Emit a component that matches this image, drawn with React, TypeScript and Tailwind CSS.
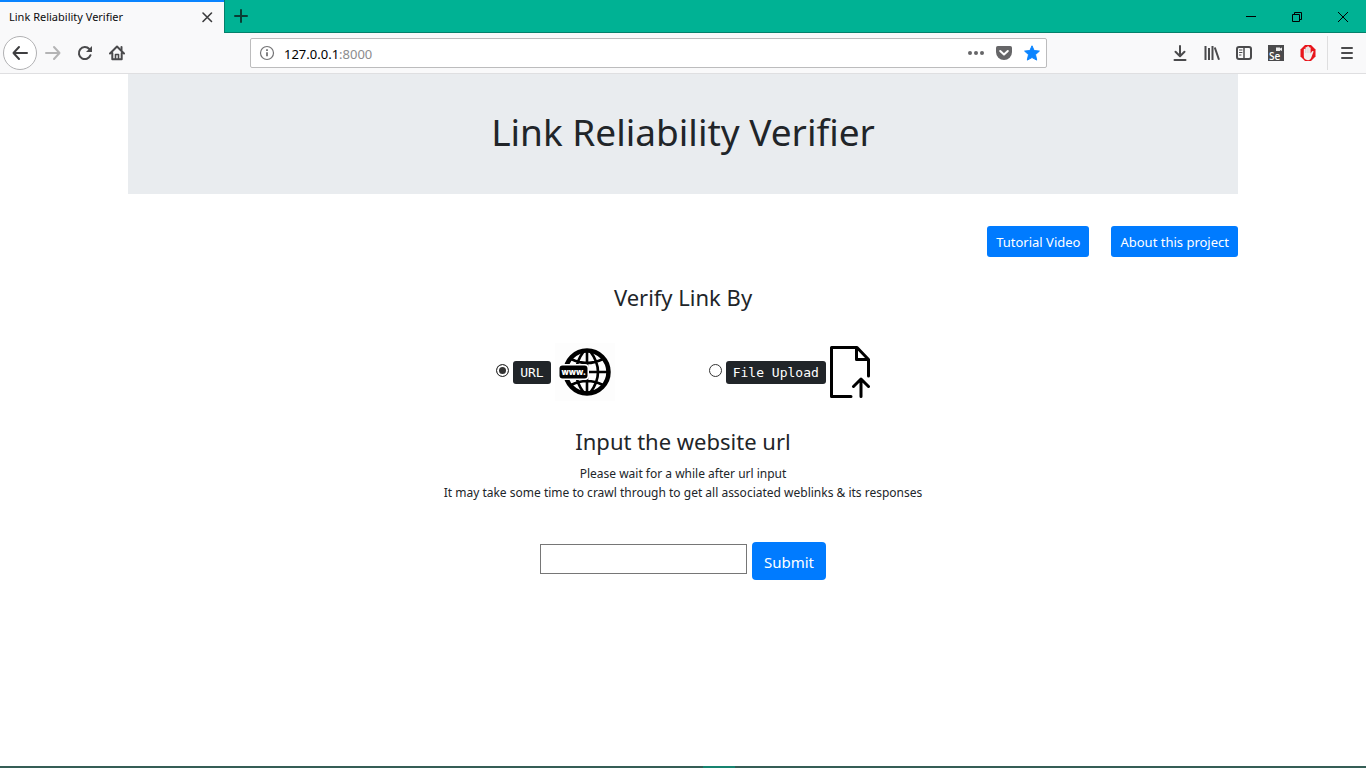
import { useState } from "react";
import type { ReactNode } from "react";

function IconButton({ label, children }: { label: string; children: ReactNode }) {
  return (
    <button type="button" aria-label={label} className="flex h-8 w-8 items-center justify-center text-[#4a4a4c]">
      {children}
    </button>
  );
}

const stroke = { fill: "none", stroke: "currentColor", strokeWidth: 2, strokeLinecap: "round", strokeLinejoin: "round" } as const;

function TabStrip() {
  return (
    <div className="flex h-[33px] bg-[#00b294]">
      <div className="flex w-56 items-center justify-between border-t-2 border-[#0a84ff] bg-[#f9f9fa] pr-2.5 pb-0.5 pl-[9px]">
        <span className="text-[11px] leading-4 text-[#0c0c0d]">Link Reliability Verifier</span>
        <button type="button" aria-label="Close tab" className="text-[#3c3c3e]">
          <svg width="14" height="14" viewBox="0 0 14 14" {...stroke} strokeWidth="1.6"><path d="M3 3l8.500 8.500M11.500 3L3 11.500" /></svg>
        </button>
      </div>
      <div className="flex flex-1 justify-between border-b border-l border-[#04806b]">
        <button type="button" aria-label="New tab" className="flex w-8 items-center justify-center text-[#0b3d34]">
          <svg width="16" height="16" viewBox="0 0 16 16" {...stroke}><path d="M8 2v12M2 8h12" /></svg>
        </button>
        <div className="flex text-black">
          <button type="button" aria-label="Minimize" className="flex w-[46px] items-center justify-center">
            <svg width="12" height="12" viewBox="0 0 12 12" fill="none" stroke="currentColor"><path d="M1 6.500h10" /></svg>
          </button>
          <button type="button" aria-label="Restore" className="flex w-[46px] items-center justify-center">
            <svg width="12" height="12" viewBox="0 0 12 12" fill="none" stroke="currentColor"><path d="M1.500 4.500h7v7h-7zM3.500 4.500v-2h7v7h-2" /></svg>
          </button>
          <button type="button" aria-label="Close window" className="flex w-[46px] items-center justify-center">
            <svg width="12" height="12" viewBox="0 0 12 12" fill="none" stroke="currentColor"><path d="M1 2l10 10M11 2L1 12" /></svg>
          </button>
        </div>
      </div>
    </div>
  );
}

function Toolbar() {
  return (
    <div className="flex h-[41px] items-center border-b border-[#dfdfe1] bg-[#f9f9fa] px-[3px]">
      <button type="button" aria-label="Back" className="flex h-[34px] w-[34px] items-center justify-center rounded-full border border-[#b1b1b3] bg-white text-[#3e3e40]">
        <svg width="16" height="16" viewBox="0 0 16 16" {...stroke}><path d="M15 8H1.500M7 2L1.500 8L7 14" /></svg>
      </button>
      <button type="button" aria-label="Forward" disabled className="flex h-8 w-8 items-center justify-center text-[#b4b4b5]">
        <svg width="16" height="16" viewBox="0 0 16 16" {...stroke}><path d="M1 8h13.500M9 2l5.500 6L9 14" /></svg>
      </button>
      <IconButton label="Reload">
        <svg width="16" height="16" viewBox="0 0 16 16" {...stroke}>
          <path d="M13.500 10.200A6 6 0 1 1 12.300 4" />
          <path d="M15 1v6H9z" fill="currentColor" stroke="none" />
        </svg>
      </IconButton>
      <IconButton label="Home">
        <svg width="16" height="16" viewBox="0 0 16 16" {...stroke}>
          <path d="M1 8.500L8 1.500l7 7M3.300 8v6.300h9.400V8" />
          <path d="M6.500 14V9.500h3V14" strokeWidth="1.600" /><path d="M12.500 2v3" />
        </svg>
      </IconButton>

      <div className="mx-[117px] flex h-[30px] flex-1 items-center rounded-xs border border-[#bcbcbd] bg-white pr-1.5 pl-2">
        <svg width="16" height="16" viewBox="0 0 16 16" fill="none" stroke="#737375" aria-hidden="true">
          <circle cx="8" cy="8" r="6.500" strokeWidth="1.200" />
          <path d="M8 7.200v4M8 4.300v1.700" strokeWidth="1.800" />
        </svg>
        <span className="relative ml-[9px] flex-1 pt-0.5 text-[13px] leading-5">
          <input aria-label="Address" defaultValue="127.0.0.1:8000" className="w-full bg-transparent text-transparent caret-black outline-none" />
          <span aria-hidden="true" className="pointer-events-none absolute inset-0 pt-0.5 text-black">127.0.0.1<span className="text-[#8c8c8d]">:8000</span></span>
        </span>
        <div className="flex gap-3 text-[#666668]">
          <button type="button" aria-label="Page actions">
            <svg width="16" height="16" viewBox="0 0 16 16" fill="currentColor"><circle cx="2" cy="8" r="2" /><circle cx="8" cy="8" r="2" /><circle cx="14" cy="8" r="2" /></svg>
          </button>
          <button type="button" aria-label="Save to Pocket">
            <svg width="16" height="16" viewBox="0 0 16 16"><path d="M1.800 1h12.400Q16 1 16 2.800V7a8 8 0 0 1-16 0V2.800Q0 1 1.800 1z" fill="currentColor" /><path d="M4.200 6L8 9.600L11.800 6" {...stroke} stroke="#fff" /></svg>
          </button>
          <button type="button" aria-label="Bookmark this page" className="text-[#0a84ff]">
            <svg width="16" height="16" viewBox="0 0 16 16" fill="currentColor" stroke="currentColor" strokeLinejoin="round"><path d="M8 .8l2.100 4.700 5.300.6-3.900 3.500 1.200 5.500L8 12.500l-4.700 2.600 1.200-5.500L.6 6.100l5.300-.6z" /></svg>
          </button>
        </div>
      </div>

      <IconButton label="Downloads">
        <svg width="16" height="16" viewBox="0 0 16 16" {...stroke}><path d="M8 1v10M3.500 6.800L8 11.300l4.500-4.500M2.500 15h11" /></svg>
      </IconButton>
      <IconButton label="Library">
        <svg width="16" height="16" viewBox="0 0 16 16" {...stroke} strokeLinecap="butt"><path d="M1.500 1v14M5 3v12M8.500 1v14M10.800 2.500l4.200 12.300" /></svg>
      </IconButton>
      <IconButton label="Sidebars">
        <svg width="16" height="16" viewBox="0 0 16 16" {...stroke}><rect x="1" y="2" width="14" height="12" rx="2" /><path d="M8 2v12" strokeWidth="1.500" /><path d="M3.500 5h2.500M3.500 7.500h2.500M3.500 10h1.500" strokeWidth="1" /></svg>
      </IconButton>
      <IconButton label="Selenium">
        <svg width="16" height="16" viewBox="0 0 16 16">
          <path d="M0 0h16v16H0z" fill="currentColor" />
          <path d="M8 2.500h4v1l2-1v3.500l-2-1V6H8z" fill="#eee" />
          <text x="1" y="14.500" fontSize="10" fontWeight="600" fill="#fff" fontFamily="Open Sans, sans-serif">Se</text>
        </svg>
      </IconButton>
      <IconButton label="Ad blocker">
        <svg width="16" height="16" viewBox="0 0 16 16">
          <path d="M5 0h6l4.500 4.500v7L11 16H5L.5 11.500v-7z" fill="#e8151b" />
          <path d="M3.800 8.500V4.200q1-1 1.700 0V2.400q1-1 1.700 0V1.600q1-.8 1.700 0v1q1-.9 1.700.1v5.800l1.500-2.300q1.400-.6 1.500.4l-1.900 5Q10.700 15.200 8 15.200q-4.200-.5-4.200-4.200z" fill="#f2f0f0" />
          <path d="M5.500 4v4M7.200 3v5M8.900 3v5" stroke="#bdb8b8" strokeWidth=".4" />
        </svg>
      </IconButton>
      <div className="mx-[3px] h-[34px] w-px bg-[#dededf]" />
      <IconButton label="Open menu">
        <svg width="16" height="16" viewBox="0 0 16 16" {...stroke}><path d="M3 3h10M3 8h10M3 13h10" /></svg>
      </IconButton>
    </div>
  );
}

function GlobeIcon() {
  return (
    <svg width="60" height="58" viewBox="0 0 60 58" className="bg-[#fdfdfd]" aria-hidden="true">
      <g fill="none" stroke="#000" strokeWidth="3">
        <circle cx="32" cy="29" r="21.500" strokeWidth="4.500" />
        <path d="M32 8v42M11 29h42M16 16q16 8 32 0M16 42q16-8 32 0M29 8Q13 29 29 50M35 8Q51 29 35 50" strokeWidth="2.600" />
      </g>
      <rect x="3" y="21" width="31" height="16" rx="4" fill="#fff" />
      <rect x="4.500" y="22.500" width="28" height="13" rx="3" fill="#000" />
      <text x="18.500" y="31.500" textAnchor="middle" fontSize="8" fontWeight="800" fill="#fff" fontFamily="Open Sans, sans-serif">www.</text>
    </svg>
  );
}

function FileUploadIcon() {
  return (
    <svg width="40" height="52" viewBox="0 0 40 52" fill="none" stroke="#000" strokeWidth="3" strokeLinejoin="round" aria-hidden="true">
      <path d="M21 50.500H1.500v-49H27l11.500 12V30" strokeLinecap="round" />
      <path d="M26.500 2v11.500h12" />
      <path d="M31 50.500V33M23.500 40.500l7.500-7.500 7.500 7.500" strokeLinecap="round" />
    </svg>
  );
}

function Choice({ label, checked, onSelect, children }: { label: string; checked: boolean; onSelect: () => void; children: ReactNode }) {
  return (
    <label className="flex items-center gap-1">
      <input
        type="radio"
        name="method"
        checked={checked}
        onChange={onSelect}
        className="mb-1 h-[13px] w-[13px] appearance-none rounded-full border border-[#333] bg-white checked:bg-[#333] checked:shadow-[inset_0_0_0_2px_#fff]"
      />
      <kbd className="rounded-[3px] bg-[#212529] px-[7px] py-0.5 text-[13px] leading-[19px] text-white font-['DejaVu_Sans_Mono','Liberation_Mono',monospace]">
        {label}
      </kbd>
      {children}
    </label>
  );
}

export default function App() {
  const [method, setMethod] = useState<"url" | "file">("url");
  return (
    <div className="flex min-h-screen flex-col bg-white text-[#212529] font-['Noto_Sans','Open_Sans',sans-serif]">
      <TabStrip />
      <Toolbar />
      <main className="mx-auto w-full max-w-[1110px] flex-1 text-center">
        <header className="bg-[#e9ecef] pt-[34px] pb-[38px]">
          <h1 className="text-[37px] leading-[48px]">Link Reliability Verifier</h1>
        </header>
        <nav className="mt-8 flex justify-end gap-[22px] text-[13px] leading-[31px] text-white">
          <a href="#tutorial" className="h-[31px] rounded-[3px] bg-[#007bff] px-[9px] pt-px">Tutorial Video</a>
          <a href="#about" className="h-[31px] rounded-[3px] bg-[#007bff] px-[9px] pt-px">About this project</a>
        </nav>
        <h2 className="mt-6 text-[22px] leading-8">Verify Link By</h2>
        <div className="mt-[30px] flex justify-center gap-[94px]">
          <Choice label="URL" checked={method === "url"} onSelect={() => setMethod("url")}><GlobeIcon /></Choice>
          <Choice label="File Upload" checked={method === "file"} onSelect={() => setMethod("file")}><FileUploadIcon /></Choice>
        </div>
        <h2 className="mt-6 text-[22px] leading-8">
          <label htmlFor="website">Input the website url</label>
        </h2>
        <p className="mt-[7px] text-[12px] leading-[19px]">
          Please wait for a while after url input
          <br />
          It may take some time to crawl through to get all associated weblinks &amp; its responses
        </p>
        <form className="mt-10 flex items-start justify-center gap-[5px]" onSubmit={(e) => e.preventDefault()}>
          <input id="website" type="text" className="mt-0.5 h-[30px] w-[207px] border border-[#767676] px-1 outline-none" />
          <button type="submit" className="h-[38px] rounded-sm bg-[#007bff] px-3 pt-0.5 text-[15px] text-white">Submit</button>
        </form>
      </main>
      <footer className="flex h-0.5 justify-center bg-[#355e56]">
        <div className="ml-[72px] w-8 bg-[#16836f]" />
      </footer>
    </div>
  );
}
